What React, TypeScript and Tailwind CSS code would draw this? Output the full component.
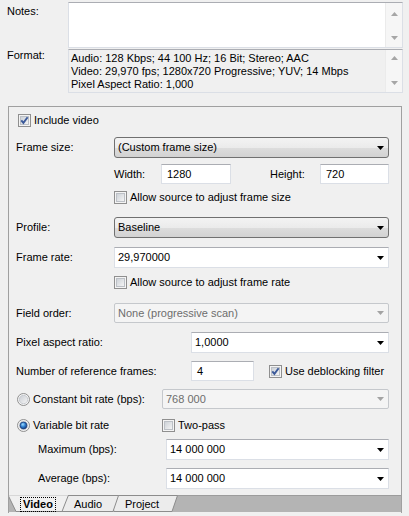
import React from "react";

function Arrow({ color = "#000" }: { color?: string }) {
  return (
    <svg width="7" height="4" viewBox="0 0 7 4" className="shrink-0">
      <path d="M0 0H7L3.5 4Z" fill={color} />
    </svg>
  );
}

function Check({ checked }: { checked?: boolean }) {
  return (
    <svg width="13" height="13" viewBox="0 0 13 13" className="shrink-0">
      <defs>
        <linearGradient id="cbg" x1="0" y1="0" x2="1" y2="1">
          <stop offset="0" stopColor="#cbd0d6" />
          <stop offset="1" stopColor="#f6f6f6" />
        </linearGradient>
      </defs>
      <rect x="0.5" y="0.5" width="12" height="12" fill="#f4f4f4" stroke="#8f8f8f" />
      <rect x="2.5" y="2.5" width="8" height="8" fill="url(#cbg)" stroke="#bcc0c6" />
      {checked && (
        <path d="M3.3 6.3L5.4 8.9L9.6 3.2" stroke="#3c5a9a" strokeWidth="1.9" fill="none" />
      )}
    </svg>
  );
}

function Radio({ checked }: { checked?: boolean }) {
  return (
    <svg width="13" height="13" viewBox="0 0 13 13" className="shrink-0">
      <defs>
        <linearGradient id="rbg" x1="0" y1="0" x2="1" y2="1">
          <stop offset="0" stopColor="#c9cdd3" />
          <stop offset="1" stopColor="#f6f6f6" />
        </linearGradient>
        <radialGradient id="rdot" cx="0.4" cy="0.35" r="0.7">
          <stop offset="0" stopColor="#9fdcff" />
          <stop offset="0.5" stopColor="#2f7fd0" />
          <stop offset="1" stopColor="#14397a" />
        </radialGradient>
      </defs>
      <circle cx="6.5" cy="6.5" r="6" fill="#f4f4f4" stroke="#8f8f8f" />
      <circle cx="6.5" cy="6.5" r="4.2" fill="url(#rbg)" stroke="#c0c4ca" strokeWidth="0.8" />
      {checked && <circle cx="6.5" cy="6.5" r="3.4" fill="url(#rdot)" stroke="#1c3f7c" strokeWidth="0.8" />}
    </svg>
  );
}

function ScrollBar({ up, down }: { up: number; down: number }) {
  return (
    <div className="w-[17px] bg-[#f6f6f6] border-l border-[#ebebeb] flex flex-col items-center">
      <div style={{ height: up }} />
      <svg width="7" height="4" viewBox="0 0 7 4">
        <path d="M0 4H7L3.5 0Z" fill="#a6a6a6" />
      </svg>
      <div className="flex-1" />
      <svg width="7" height="4" viewBox="0 0 7 4">
        <path d="M0 0H7L3.5 4Z" fill="#a6a6a6" />
      </svg>
      <div style={{ height: down }} />
    </div>
  );
}

function Select({ text, className = "" }: { text: string; className?: string }) {
  return (
    <div
      className={
        "h-[21px] flex items-center rounded-[3px] border border-[#707070] bg-[linear-gradient(to_bottom,#f3f3f3_0%,#ebebeb_50%,#dddddd_51%,#d2d2d2_100%)] pl-[3px] pr-[4px] " +
        className
      }
    >
      <span className="flex-1">{text}</span>
      <Arrow />
    </div>
  );
}

function Combo({ text, className = "" }: { text: string; className?: string }) {
  return (
    <div
      className={
        "h-[21px] flex items-center border border-[#dbdfe6] border-t-[#abadb3] bg-white pl-[3px] pr-[4px] " + className
      }
    >
      <span className="flex-1">{text}</span>
      <Arrow />
    </div>
  );
}

function DisabledCombo({ text, className = "" }: { text: string; className?: string }) {
  return (
    <div
      className={
        "h-[20px] flex items-center rounded-[2px] border border-[#c5c8cc] bg-[#f4f4f4] pl-[3px] pr-[4px] text-[#6d6d6d] " +
        className
      }
    >
      <span className="flex-1">{text}</span>
      <Arrow color="#a3a3a3" />
    </div>
  );
}

function Input({ text, className = "" }: { text: string; className?: string }) {
  return (
    <div
      className={
        "h-[20px] flex items-center border border-[#dbdfe6] border-t-[#abadb3] bg-white pl-[5px] " + className
      }
    >
      {text}
    </div>
  );
}

function Tabs() {
  return (
    <div className="relative h-[18px] flex items-center">
      <svg className="absolute left-0 top-0" width="392" height="18" viewBox="0 0 392 18">
        <rect x="0" y="0" width="392" height="17" fill="#b4b4b4" />
        <line x1="0" y1="0.5" x2="392" y2="0.5" stroke="#9c9c9c" />
        <polygon points="100,0.5 105,16.5 163,16.5 168.5,0.5" fill="#ececec" stroke="#8c8c8c" />
        <polygon points="48,0.5 53,16.5 104,16.5 109.5,0.5" fill="#ececec" stroke="#8c8c8c" />
        <polygon points="-1,0 7,16.5 53,16.5 59.5,0" fill="#f0f0f0" stroke="#8c8c8c" />
        <rect x="0" y="-1" width="59" height="1.5" fill="#f0f0f0" />
      </svg>
      <span className="relative ml-[11px] w-[36px] h-[15px] mt-[1px] flex items-center justify-center border border-dotted border-black font-bold">
        Video
      </span>
      <span className="relative ml-[18px] w-[27px] text-center mt-[1px]">Audio</span>
      <span className="relative ml-[23px] w-[36px] text-center mt-[1px]">Project</span>
    </div>
  );
}

export default function App() {
  return (
    <div className="w-[409px] h-[516px] bg-[#f0f0f0] text-[11px] leading-[13px] text-black font-['Liberation_Sans',Arial,sans-serif] overflow-hidden">
      <div className="flex pt-[2px] pr-[6px]">
        <div className="w-[68px] pl-[7px] pt-[3px]">Notes:</div>
        <div className="flex-1 h-[46px] flex border border-[#dbdfe6] border-t-[#abadb3] bg-white">
          <div className="flex-1" />
          <ScrollBar up={9} down={7} />
        </div>
      </div>
      <div className="flex pt-[1px] pr-[6px]">
        <div className="w-[68px] pl-[7px] pt-[0px]">Format:</div>
        <div className="flex-1 h-[44px] flex border border-[#dbdfe6] border-t-[#abadb3] bg-[#f0f0f0]">
          <div className="flex-1 pl-[2px] pt-[2px] leading-[13px]">
            <div>Audio: 128 Kbps; 44 100 Hz; 16 Bit; Stereo; AAC</div>
            <div>Video: 29,970 fps; 1280x720 Progressive; YUV; 14 Mbps</div>
            <div>Pixel Aspect Ratio: 1,000</div>
          </div>
          <ScrollBar up={6} down={7} />
        </div>
      </div>

      <div className="ml-[8px] mt-[13px] w-[394px] border-l border-t border-r border-[#a0a0a0] flex flex-col">
        <div className="pl-[7px] pr-[12px] flex flex-col">
          <div className="mt-[6px] h-[14px] flex items-center">
            <span className="ml-[2px]">
              <Check checked />
            </span>
            <span className="ml-[3px]">Include video</span>
          </div>
          <div className="mt-[10px] flex items-center">
            <span className="w-[98px]">Frame size:</span>
            <Select text="(Custom frame size)" className="flex-1" />
          </div>
          <div className="mt-[6px] flex items-center pl-[98px]">
            <span className="w-[47px]">Width:</span>
            <Input text="1280" className="w-[70px]" />
            <span className="ml-[39px] w-[50px]">Height:</span>
            <Input text="720" className="flex-1" />
          </div>
          <div className="mt-[6px] h-[14px] flex items-center pl-[98px]">
            <Check />
            <span className="ml-[3px]">Allow source to adjust frame size</span>
          </div>
          <div className="mt-[13px] flex items-center">
            <span className="w-[98px]">Profile:</span>
            <Select text="Baseline" className="flex-1" />
          </div>
          <div className="mt-[9px] flex items-center">
            <span className="w-[98px]">Frame rate:</span>
            <Combo text="29,970000" className="flex-1" />
          </div>
          <div className="mt-[7px] h-[14px] flex items-center pl-[98px]">
            <Check />
            <span className="ml-[3px]">Allow source to adjust frame rate</span>
          </div>
          <div className="mt-[14px] flex items-center">
            <span className="w-[98px]">Field order:</span>
            <DisabledCombo text="None (progressive scan)" className="flex-1" />
          </div>
          <div className="mt-[9px] flex items-center">
            <span className="w-[175px]">Pixel aspect ratio:</span>
            <Combo text="1,0000" className="flex-1 h-[20px]" />
          </div>
          <div className="mt-[8px] flex items-center">
            <span className="w-[175px]">Number of reference frames:</span>
            <Input text="4" className="w-[63px]" />
            <span className="ml-[15px]">
              <Check checked />
            </span>
            <span className="ml-[3px]">Use deblocking filter</span>
          </div>
          <div className="mt-[8px] flex items-center">
            <span className="w-[146px] flex items-center">
              <span className="ml-[1px]">
                <Radio />
              </span>
              <span className="ml-[3px]">Constant bit rate (bps):</span>
            </span>
            <DisabledCombo text="768 000" className="flex-1" />
          </div>
          <div className="mt-[9px] h-[14px] flex items-center">
            <span className="w-[146px] flex items-center">
              <span className="ml-[1px]">
                <Radio checked />
              </span>
              <span className="ml-[3px]">Variable bit rate</span>
            </span>
            <Check />
            <span className="ml-[3px]">Two-pass</span>
          </div>
          <div className="mt-[7px] flex items-center">
            <span className="w-[150px] pl-[22px]">Maximum (bps):</span>
            <Combo text="14 000 000" className="flex-1 h-[20px]" />
          </div>
          <div className="mt-[8px] flex items-center">
            <span className="w-[150px] pl-[22px]">Average (bps):</span>
            <Combo text="14 000 000" className="flex-1 h-[20px]" />
          </div>
          <div className="h-[6px]" />
        </div>
        <Tabs />
      </div>
    </div>
  );
}
